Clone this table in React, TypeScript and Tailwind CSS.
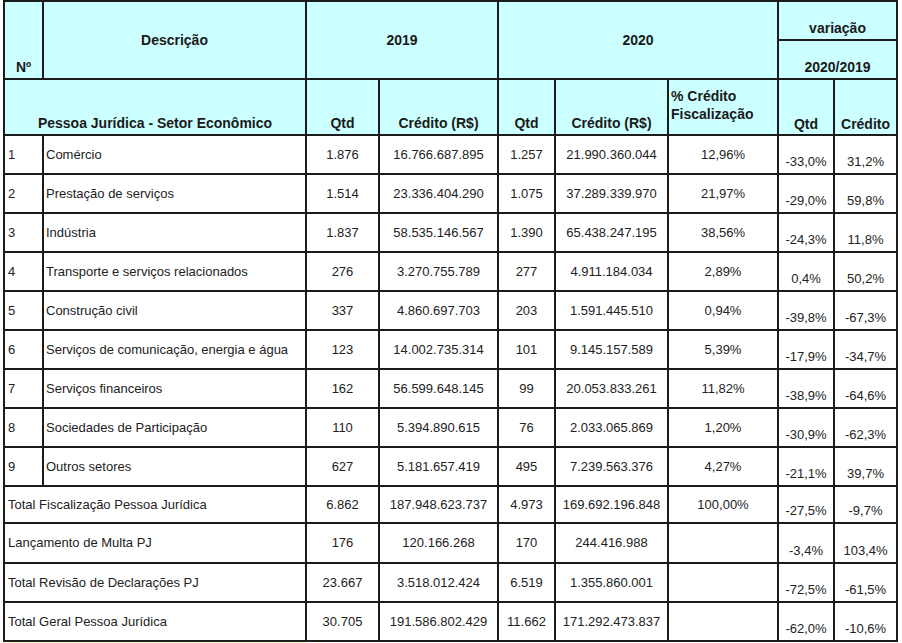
import React from "react";

type Row = string[];

const setores: Row[] = [
  ["1", "Comércio", "1.876", "16.766.687.895", "1.257", "21.990.360.044", "12,96%", "-33,0%", "31,2%"],
  ["2", "Prestação de serviços", "1.514", "23.336.404.290", "1.075", "37.289.339.970", "21,97%", "-29,0%", "59,8%"],
  ["3", "Indústria", "1.837", "58.535.146.567", "1.390", "65.438.247.195", "38,56%", "-24,3%", "11,8%"],
  ["4", "Transporte e serviços relacionados", "276", "3.270.755.789", "277", "4.911.184.034", "2,89%", "0,4%", "50,2%"],
  ["5", "Construção civil", "337", "4.860.697.703", "203", "1.591.445.510", "0,94%", "-39,8%", "-67,3%"],
  ["6", "Serviços de comunicação, energia e água", "123", "14.002.735.314", "101", "9.145.157.589", "5,39%", "-17,9%", "-34,7%"],
  ["7", "Serviços financeiros", "162", "56.599.648.145", "99", "20.053.833.261", "11,82%", "-38,9%", "-64,6%"],
  ["8", "Sociedades de Participação", "110", "5.394.890.615", "76", "2.033.065.869", "1,20%", "-30,9%", "-62,3%"],
  ["9", "Outros setores", "627", "5.181.657.419", "495", "7.239.563.376", "4,27%", "-21,1%", "39,7%"],
];

const totais: { cells: Row; h: string }[] = [
  { cells: ["Total Fiscalização Pessoa Jurídica", "6.862", "187.948.623.737", "4.973", "169.692.196.848", "100,00%", "-27,5%", "-9,7%"], h: "h-[37px]" },
  { cells: ["Lançamento de Multa PJ", "176", "120.166.268", "170", "244.416.988", "", "-3,4%", "103,4%"], h: "h-[40px]" },
  { cells: ["Total Revisão de Declarações PJ", "23.667", "3.518.012.424", "6.519", "1.355.860.001", "", "-72,5%", "-61,5%"], h: "h-[39px]" },
  { cells: ["Total Geral Pessoa Jurídica", "30.705", "191.586.802.429", "11.662", "171.292.473.837", "", "-62,0%", "-10,6%"], h: "h-[39px]" },
];

const cell = "border-2 border-[#1c1c1c] p-0";
const head = `${cell} bg-[#ccffff] font-bold text-[14px] text-[#1a1a1a]`;
const data = `${cell} bg-white text-[13px] text-[#222]`;

const App = () => {
  return (
    <div
      className="w-[902px] h-[643px] overflow-hidden bg-white"
      style={{ fontFamily: '"Liberation Sans", Arial, sans-serif' }}
    >
      <table className="ml-[3px] w-[895px] table-fixed border-collapse leading-[16px]">
        <colgroup>
          <col className="w-[39px]" />
          <col className="w-[263px]" />
          <col className="w-[73px]" />
          <col className="w-[119px]" />
          <col className="w-[57px]" />
          <col className="w-[113px]" />
          <col className="w-[110px]" />
          <col className="w-[56px]" />
          <col className="w-[63px]" />
        </colgroup>
        <thead>
          <tr className="h-[39px]">
            <th rowSpan={2} className={`${head} align-bottom pb-[3px] text-[13px]`}>Nº</th>
            <th rowSpan={2} className={`${head} align-middle`}>Descrição</th>
            <th rowSpan={2} colSpan={2} className={`${head} align-middle`}>2019</th>
            <th rowSpan={2} colSpan={3} className={`${head} align-middle`}>2020</th>
            <th colSpan={2} className={`${head} align-bottom pb-[3px]`}>variação</th>
          </tr>
          <tr className="h-[39px]">
            <th colSpan={2} className={`${head} align-bottom pb-[3px]`}>2020/2019</th>
          </tr>
          <tr className="h-[56px]">
            <th colSpan={2} className={`${head} align-bottom pb-[3px]`}>Pessoa Jurídica - Setor Econômico</th>
            <th className={`${head} align-bottom pb-[3px]`}>Qtd</th>
            <th className={`${head} align-bottom pb-[3px]`}>Crédito (R$)</th>
            <th className={`${head} align-bottom pb-[3px]`}>Qtd</th>
            <th className={`${head} align-bottom pb-[3px]`}>Crédito (R$)</th>
            <th className={`${head} align-top pt-[7px] pl-[2px] text-left leading-[18px]`}>
              % Crédito
              <br />
              Fiscalização
            </th>
            <th className={`${head} align-bottom pb-[2px]`}>Qtd</th>
            <th className={`${head} align-bottom pb-[2px]`}>Crédito</th>
          </tr>
        </thead>
        <tbody>
          {setores.map(r => (
            <tr key={r[0]} className="h-[39px]">
              <td className={`${data} pl-[3px] align-middle`}>{r[0]}</td>
              <td className={`${data} pl-[2px] align-middle`}>{r[1]}</td>
              {r.slice(2, 7).map((v, i) => (
                <td key={i} className={`${data} text-center align-middle`}>{v}</td>
              ))}
              <td className={`${data} text-center align-bottom pb-[3px]`}>{r[7]}</td>
              <td className={`${data} text-center align-bottom pb-[3px]`}>{r[8]}</td>
            </tr>
          ))}
          {totais.map(({ cells, h }) => (
            <tr key={cells[0]} className={h}>
              <td colSpan={2} className={`${data} pl-[3px] align-middle`}>{cells[0]}</td>
              {cells.slice(1, 6).map((v, i) => (
                <td key={i} className={`${data} text-center align-middle`}>{v}</td>
              ))}
              <td className={`${data} text-center align-bottom pb-[3px]`}>{cells[6]}</td>
              <td className={`${data} text-center align-bottom pb-[3px]`}>{cells[7]}</td>
            </tr>
          ))}
          <tr className="h-[20px]">
            <td colSpan={2} className="bg-[#ffffcc] p-0" />
            <td colSpan={7} className="p-0" />
          </tr>
        </tbody>
      </table>
    </div>
  );
};

export default App;
